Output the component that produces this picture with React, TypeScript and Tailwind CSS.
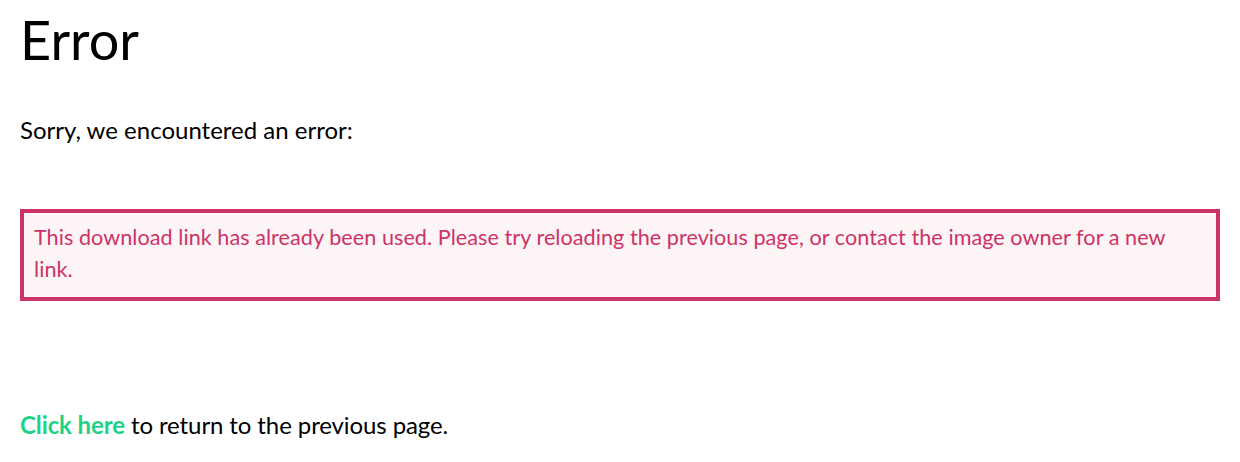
export default function App() {
  return (
    <div className="min-h-screen bg-white px-5 text-black font-['Lato',sans-serif]">
      <h1 className="pt-2 text-[54px] leading-[1.2] font-normal">Error</h1>

      <p className="mt-[39px] text-[24px] leading-[1.5]">Sorry, we encountered an error:</p>

      <div className="mt-[61px] border-4 border-[#cc3366] bg-[#fdf4f6] pl-[10px] pr-5 pt-2 pb-[11px] text-[21.6px] leading-[1.5] tracking-[0.05px] text-[#cc3366]">
        This download link has already been used. Please try reloading the previous page, or contact the image owner for a new
        link.
      </div>

      <p className="mt-[106px] text-[24px] leading-[1.5] tracking-[-0.1px]">
        <a href="#" className="font-bold text-[#1fd187]">
          Click here
        </a>{' '}
        to return to the previous page.
      </p>
    </div>
  );
}
